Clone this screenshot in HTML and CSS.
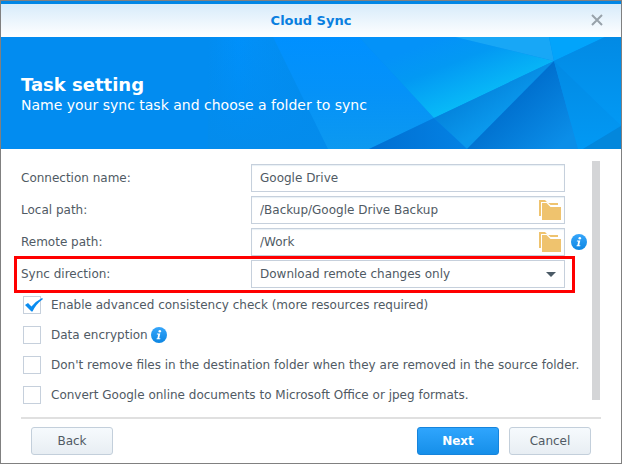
FILE: index.html
```html
<!DOCTYPE html>
<html lang="en">
<head>
    <meta charset="UTF-8">
    <meta name="viewport" content="width=device-width, initial-scale=1.0">
    <title>Cloud Sync</title>
    <link rel="stylesheet" href="styles.css">
</head>
<body>
    <!-- Shared icons -->
    <svg class="icon-defs" width="0" height="0" aria-hidden="true">
        <defs>
            <linearGradient id="infoFill" x1="0" y1="0" x2="0" y2="1">
                <stop offset="0" stop-color="#36a6fb"/>
                <stop offset="1" stop-color="#0d86e2"/>
            </linearGradient>
            <symbol id="folder" viewBox="0 0 22 20">
                <path fill="#efc36e" d="M0 0H6L9 3H19V5H11.500L8 2H2V16H0Z"/>
                <path fill="#efc36e" d="M3 3H7.500L11.500 7H22V20H3Z"/>
            </symbol>
            <symbol id="info" viewBox="0 0 16 16">
                <circle cx="8" cy="8" r="8" fill="url(#infoFill)"/>
                <circle cx="8.800" cy="4.200" r="1.300" fill="#fff"/>
                <path fill="#fff" d="M6 6.500H9.300L8.200 11.200H9.400L9.200 12.300H5.500L5.700 11.200H6.400L7.200 7.600H5.800Z"/>
            </symbol>
        </defs>
    </svg>

    <div class="window">
        <header class="title-bar">
            <h1>Cloud Sync</h1>
            <button type="button" class="close-button" aria-label="Close">
                <svg width="12" height="12" viewBox="0 0 12 12"><path d="M1 1L11 11M11 1L1 11" stroke="#98a2aa" stroke-width="2" fill="none"/></svg>
            </button>
        </header>

        <div class="banner">
            <svg class="banner-art" viewBox="0 0 620 112" preserveAspectRatio="xMaxYMid slice" aria-hidden="true">
                <defs>
                    <linearGradient id="g1" x1="0" y1="0" x2="0" y2="1">
                        <stop offset="0" stop-color="#028cf0" stop-opacity="0"/>
                        <stop offset="1" stop-color="#048cec"/>
                    </linearGradient>
                    <linearGradient id="g2" x1="0" y1="0" x2="0" y2="1">
                        <stop offset="0" stop-color="#0090ff"/>
                        <stop offset="0.500" stop-color="#0592f8"/>
                        <stop offset="1" stop-color="#0c99f0"/>
                    </linearGradient>
                    <linearGradient id="g3" gradientUnits="userSpaceOnUse" x1="440" y1="0" x2="466" y2="66">
                        <stop offset="0" stop-color="#0492f8"/>
                        <stop offset="0.400" stop-color="#0399f3"/>
                        <stop offset="1" stop-color="#08b9f7"/>
                    </linearGradient>
                    <linearGradient id="g4" gradientUnits="userSpaceOnUse" x1="480" y1="50" x2="500" y2="80">
                        <stop offset="0" stop-color="#0484dd"/>
                        <stop offset="1" stop-color="#0a98ec"/>
                    </linearGradient>
                    <linearGradient id="g5" gradientUnits="userSpaceOnUse" x1="510" y1="60" x2="555" y2="112">
                        <stop offset="0" stop-color="#006fce"/>
                        <stop offset="1" stop-color="#0b8ee8"/>
                    </linearGradient>
                    <linearGradient id="g6" x1="0" y1="0" x2="0" y2="1">
                        <stop offset="0" stop-color="#028ae4"/>
                        <stop offset="1" stop-color="#0299f4"/>
                    </linearGradient>
                    <linearGradient id="g7" x1="0" y1="0" x2="1" y2="0">
                        <stop offset="0" stop-color="#028cf0"/>
                        <stop offset="0.250" stop-color="#0090fa"/>
                        <stop offset="0.400" stop-color="#028ff6"/>
                        <stop offset="1" stop-color="#038ae8"/>
                    </linearGradient>
                    <linearGradient id="g8" x1="0" y1="0" x2="1" y2="0">
                        <stop offset="0" stop-color="#006fd2"/>
                        <stop offset="1" stop-color="#0482e4"/>
                    </linearGradient>
                </defs>
                <rect width="620" height="112" fill="#028cf0"/>
                <path fill="url(#g7)" d="M207 0H272L327 112H207Z"/>
                <path fill="url(#g1)" d="M207 0H272L327 112H207Z"/>
                <path fill="url(#g2)" d="M272 0H358L433 81L368 112H327Z"/>
                <path fill="url(#g3)" d="M358 0H454L553 24L433 81Z"/>
                <path fill="#18a7f6" d="M454 0H548L553 24Z"/>
                <path fill="#02a4fb" d="M548 0H604L553 24Z"/>
                <path fill="url(#g6)" d="M604 0H620V89L553 24Z"/>
                <path fill="url(#g4)" d="M553 24L433 81L466 112Z"/>
                <path fill="url(#g8)" d="M433 81L368 112H466Z"/>
                <path fill="url(#g5)" d="M553 24L466 112H577Z"/>
                <path fill="url(#g6)" d="M553 24L577 112H582L620 89Z"/>
                <path fill="#0387dc" d="M620 89V112H582Z"/>
            </svg>
            <h2>Task setting</h2>
            <p>Name your sync task and choose a folder to sync</p>
        </div>

        <form class="task-form">
            <div class="form-body">
                <div class="form-row">
                    <label for="connectionName">Connection name:</label>
                    <div class="field"><input type="text" id="connectionName" value="Google Drive"></div>
                </div>
                <div class="form-row">
                    <label for="localPath">Local path:</label>
                    <div class="field">
                        <input type="text" id="localPath" value="/Backup/Google Drive Backup">
                        <button type="button" class="browse-button" aria-label="Browse local path"><svg width="22" height="20"><use href="#folder"/></svg></button>
                    </div>
                </div>
                <div class="form-row">
                    <label for="remotePath">Remote path:</label>
                    <div class="field">
                        <input type="text" id="remotePath" value="/Work">
                        <button type="button" class="browse-button" aria-label="Browse remote path"><svg width="22" height="20"><use href="#folder"/></svg></button>
                    </div>
                    <svg class="info-icon" width="16" height="16"><use href="#info"/></svg>
                </div>
                <div class="form-row highlight">
                    <label for="syncDirection">Sync direction:</label>
                    <div class="field">
                        <select id="syncDirection">
                            <option>Download remote changes only</option>
                            <option>Upload local changes only</option>
                            <option>Bidirectional</option>
                        </select>
                        <svg class="select-arrow" width="10" height="5" viewBox="0 0 10 5"><path d="M0 0H10L5 5Z" fill="#4b5a66"/></svg>
                    </div>
                </div>

                <div class="options">
                    <div class="option">
                        <span class="tick">
                            <input type="checkbox" id="consistency" checked>
                            <svg class="tick-mark" width="18" height="14" viewBox="0 0 18 14"><path d="M0 7L3 5L6.500 8.500Q11 3 17 0L18 1Q11 6 7.500 13.500H6.500Z" fill="#0a8cf0"/></svg>
                        </span>
                        <label for="consistency">Enable advanced consistency check (more resources required)</label>
                    </div>
                    <div class="option">
                        <span class="tick"><input type="checkbox" id="encryption"></span>
                        <label for="encryption">Data encryption</label>
                        <svg width="16" height="16"><use href="#info"/></svg>
                    </div>
                    <div class="option">
                        <span class="tick"><input type="checkbox" id="keepFiles"></span>
                        <label for="keepFiles">Don't remove files in the destination folder when they are removed in the source folder.</label>
                    </div>
                    <div class="option">
                        <span class="tick"><input type="checkbox" id="convertDocs"></span>
                        <label for="convertDocs">Convert Google online documents to Microsoft Office or jpeg formats.</label>
                    </div>
                </div>
            </div>
            <div class="scrollbar"></div>
        </form>

        <footer class="footer">
            <button type="button" class="button">Back</button>
            <div class="footer-right">
                <button type="button" class="button primary">Next</button>
                <button type="button" class="button">Cancel</button>
            </div>
        </footer>
    </div>
</body>
</html>
```
FILE: styles.css
```css
* {
    box-sizing: border-box;
}
body {
    margin: 0;
    font-family: "DejaVu Sans", Verdana, sans-serif;
    font-size: 12px;
    color: #505a64;
    background-color: #fff;
}
h1, h2, p {
    margin: 0;
}
button, input, select {
    font: inherit;
    color: inherit;
}
.icon-defs {
    position: absolute;
}
.window {
    min-height: 100vh;
    display: flex;
    flex-direction: column;
    border: 1px solid #808080;
}

/* Title bar */
.title-bar {
    position: relative;
    height: 36px;
    display: flex;
    align-items: center;
    justify-content: center;
    border-top: 3px solid #0086e5;
    background: linear-gradient(#d7ebfa, #fff);
}
.title-bar h1 {
    font-size: 13px;
    color: #0a7fe0;
}
.close-button {
    position: absolute;
    right: 18px;
    top: 10px;
    width: 12px;
    height: 12px;
    padding: 0;
    border: none;
    background: none;
}
.close-button svg {
    display: block;
}

/* Banner */
.banner {
    position: relative;
    height: 112px;
    padding: 37px 20px 0;
    color: #fff;
    background-color: #028cf0;
}
.banner-art {
    position: absolute;
    inset: 0;
    width: 100%;
    height: 100%;
}
.banner h2 {
    position: relative;
    font-size: 18px;
    line-height: 22px;
}
.banner p {
    position: relative;
    font-size: 14px;
    line-height: 18px;
}

/* Form */
.task-form {
    flex: 1;
    display: flex;
    margin: 12px 21px 13px 20px;
}
.form-body {
    flex: 1;
    padding-top: 3px;
}
.form-row {
    position: relative;
    display: flex;
    align-items: center;
    margin-bottom: 4px;
}
.form-row > label {
    width: 230px;
}
.field {
    position: relative;
    flex: 1;
    margin-right: 27px;
}
.field input, .field select {
    display: block;
    width: 100%;
    height: 28px;
    padding: 0 8px;
    border: 1px solid #c6d0dc;
    border-radius: 0;
    background-color: #fff;
    appearance: none;
}
.field input {
    box-shadow: inset 0 1px 1px #e8f0f6;
}
.browse-button {
    position: absolute;
    right: 4px;
    top: 4px;
    padding: 0;
    border: none;
    background: none;
}
.browse-button svg {
    display: block;
}
.info-icon {
    position: absolute;
    right: 5px;
    top: 6px;
}
.select-arrow {
    position: absolute;
    right: 9px;
    top: 12px;
}
.highlight::after {
    content: "";
    position: absolute;
    inset: -4px 17px -5px -7px;
    border: 3px solid #ff0000;
    pointer-events: none;
}
.options {
    display: flex;
    flex-direction: column;
    gap: 12px;
    padding: 4px 0 0 2px;
}
.option {
    display: flex;
    align-items: center;
    height: 18px;
    white-space: nowrap;
}
.option label {
    margin: 0 3px 0 10px;
}
.tick {
    position: relative;
}
.tick input {
    display: block;
    width: 18px;
    height: 18px;
    margin: 0;
    border: 1px solid #c6d0dc;
    background-color: #fff;
    appearance: none;
}
.tick-mark {
    position: absolute;
    left: 2px;
    top: 2px;
}
.scrollbar {
    width: 8px;
    margin-bottom: 4px;
    background-color: #d4d5d7;
}

/* Footer */
.footer {
    display: flex;
    justify-content: space-between;
    margin: 0 20px;
    padding: 8px 10px;
    border-top: 2px solid #e0e0e0;
}
.footer-right {
    display: flex;
    gap: 10px;
}
.button {
    width: 82px;
    height: 28px;
    padding: 0;
    border: 1px solid #c3cfdb;
    border-radius: 3px;
    background: linear-gradient(#f6fafd, #e8eef3);
}
.button.primary {
    border-color: #1684dc;
    color: #fff;
    font-weight: bold;
    background: linear-gradient(#2fa5fd, #168fe9);
}
```
